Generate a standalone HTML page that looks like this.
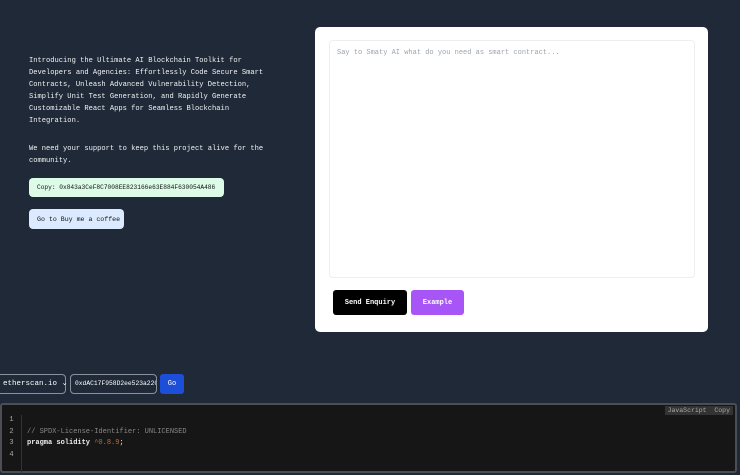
<!DOCTYPE html>
<html><head><style>
body{margin:0;width:740px;height:462px;background:#1f2937;font-family:"Liberation Mono",monospace;overflow:hidden;position:relative;color:#fff}
.intro{position:absolute;left:29px;top:55px;width:250px;font-size:7.1px;line-height:12px;color:#f3f4f6}
.intro p{margin:0 0 16px}
.btn{position:absolute;border-radius:4px;font-size:6.6px;color:#111;display:flex;align-items:center;padding-left:8px;box-sizing:border-box;white-space:nowrap;overflow:hidden}
.card{position:absolute;left:315px;top:27px;width:393px;height:305px;background:#fff;border-radius:5px}
.ta{position:absolute;left:14px;top:13px;width:366px;height:238px;border:1px solid #eceef1;border-radius:4px;box-sizing:border-box;font-size:7px;color:#9ca3af;padding:8px 7px}
.b2{position:absolute;top:263px;height:25px;border-radius:3px;font-size:7px;font-weight:bold;display:flex;align-items:center;justify-content:center}
.code{position:absolute;left:0;top:403px;width:737px;height:70px;background:#161616;border:2px solid #4b4f55;border-radius:3px;box-sizing:border-box}
.ln{position:absolute;left:0;top:10px;width:19px;border-right:1px solid #333;height:60px;font-size:7px;line-height:11.5px;color:#aaa;text-align:center}
.src{position:absolute;left:25px;top:10px;font-size:7px;line-height:11.5px;color:#eee}
</style></head><body>
<div class="intro"><p>Introducing the Ultimate AI Blockchain Toolkit for Developers and Agencies: Effortlessly Code Secure Smart Contracts, Unleash Advanced Vulnerability Detection, Simplify Unit Test Generation, and Rapidly Generate Customizable React Apps for Seamless Blockchain Integration.</p><p>We need your support to keep this project alive for the community.</p></div>
<div class="btn" style="left:29px;top:178px;width:195px;height:19px;background:#dcfce7;font-size:6.2px">Copy: 0x843a3CeF8C7008EE823166e63E884F630054A486</div>
<div class="btn" style="left:29px;top:209px;width:95px;height:20px;background:#dbeafe">Go to Buy me a coffee</div>
<div class="card">
<div class="ta">Say to Smaty AI what do you need as smart contract...</div>
<div class="b2" style="left:18px;width:74px;background:#000;color:#fff">Send Enquiry</div>
<div class="b2" style="left:96px;width:53px;background:#a855f7;color:#fff">Example</div>
</div>
<div style="position:absolute;left:-4px;top:374px;width:70px;height:20px;border:1px solid #8a919c;border-radius:4px;box-sizing:border-box;font-size:7.5px;line-height:18px;padding-left:6px;white-space:nowrap">etherscan.io &#8964;</div>
<div style="position:absolute;left:70px;top:374px;width:87px;height:20px;border:1px solid #8a919c;border-radius:4px;box-sizing:border-box;font-size:6.3px;line-height:18px;padding-left:4px;overflow:hidden;white-space:nowrap">0xdAC17F958D2ee523a220</div>
<div style="position:absolute;left:160px;top:374px;width:24px;height:20px;background:#1d4ed8;border-radius:3px;font-size:7px;line-height:20px;text-align:center">Go</div>
<div class="code">
<div class="ln">1<br>2<br>3<br>4</div>
<div class="src"><br><span style="color:#888">// SPDX-License-Identifier: UNLICENSED</span><br><b>pragma solidity</b> <span style="color:#c0683a">^0.8.9</span>;</div>
<div style="position:absolute;right:2px;top:1px;background:#333;color:#aaa;font-size:6.5px;padding:1px 3px">JavaScript&nbsp; Copy</div>
</div>
</body></html>
